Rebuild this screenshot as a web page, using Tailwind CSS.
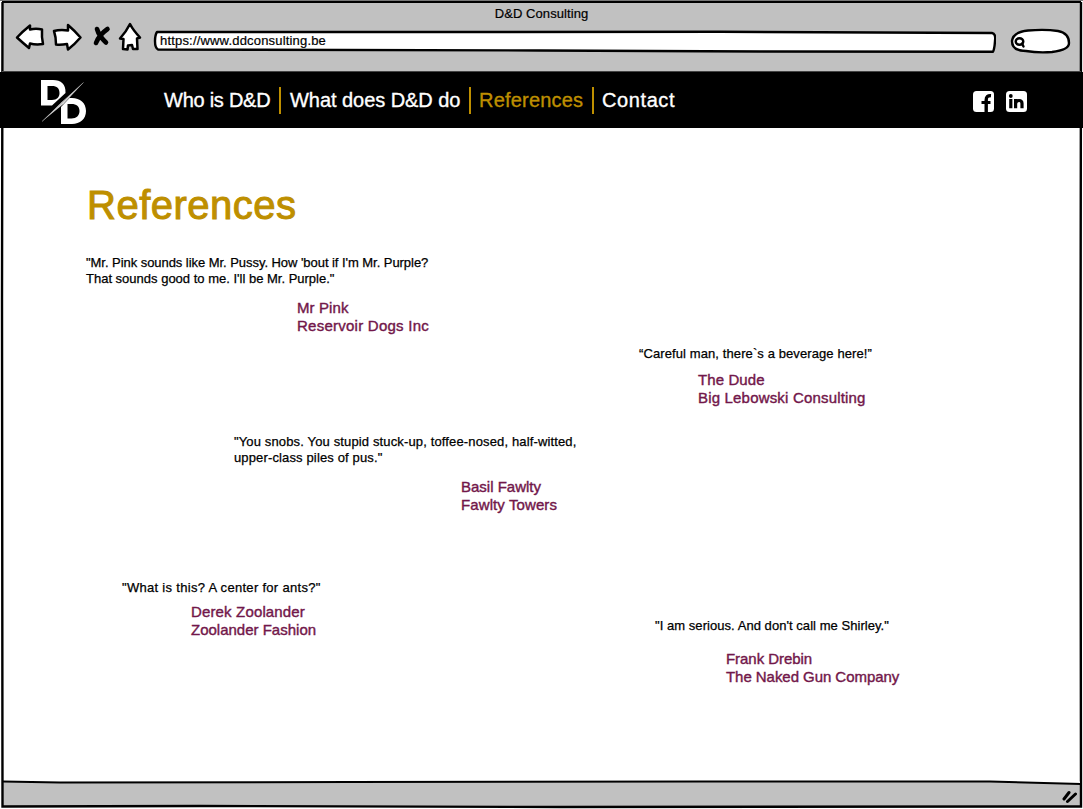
<!DOCTYPE html>
<html lang="en">
<head>
<meta charset="utf-8">
<title>D&amp;D Consulting</title>
<script src="https://cdn.jsdelivr.net/npm/@tailwindcss/browser@4"></script>
</head>
<body class="relative flex h-[809px] w-[1083px] flex-col overflow-hidden bg-white font-['Liberation_Sans',sans-serif] whitespace-nowrap text-black">
  <header class="mx-[2px] h-[72px] shrink-0 bg-[#c1c1c1]">
    <div class="flex h-[26px] justify-center pt-[6px] text-[13px] leading-4 tracking-[0.08px] [-webkit-text-stroke:0.2px]">D&amp;D Consulting</div>
    <div class="flex h-[30px] items-center pl-[12px]">
      <svg class="h-[30px] w-[138px] shrink-0 overflow-visible" viewBox="14 26 138 30" fill="white" stroke="black" stroke-width="2.5" stroke-linejoin="round" stroke-linecap="round">
        <path d="M17 37.5 Q22 32 30 25.500 L30 29.500 Q36 28 42 29.500 Q41.500 37 43 44 Q36 45 30 43.500 L29 48 Q23 43 17 37.500Z"/>
        <path d="M54 31 Q60 29.500 68 30.500 L68 25 Q75 31 80.500 37.500 Q75 44 68 49.500 L67 44 Q61 45 56 44.500 Q56 37 54 31Z"/>
        <path d="M97 29 Q99 36 106 42.500 M107.500 29 Q99 35 96 43" fill="none" stroke-width="4.600"/>
        <path d="M130 24 Q133 30 140 37.500 L137 38.500 L137.500 49 L133 49 L132 45 L128 45.500 L127.500 49.500 L123 49 L123.500 39 L120 38.500 Q126 32 130 24Z"/>
      </svg>
      <div class="relative flex h-[24px] w-[844px] items-center pl-[8px]">
        <svg class="absolute inset-0 h-[24px] w-[844px]" viewBox="152 29 844 24" fill="white" stroke="black" stroke-width="2.4" stroke-linejoin="round"><path d="M157 32 L460 32 L720 31.800 L992 33 Q996 33.500 995 41 Q994.500 49 993 51.700 L760 51.500 L540 50.500 L158 49.500 Q155 48 155 41 Q155 35 157 32Z"/></svg>
        <span class="relative text-[13px] tracking-[0.18px] [-webkit-text-stroke:0.2px]">https://www.ddconsulting.be</span>
      </div>
      <svg class="ml-[12px] h-[28px] w-[64px] shrink-0" viewBox="1008 27 64 28" fill="white" stroke="black" stroke-width="2.4" stroke-linecap="round"><path d="M1012 41 Q1013 32 1028 30.500 Q1045 29 1058 31 Q1069 33 1069 43 Q1069 50 1052 52 Q1038 53 1026 51 Q1012 51 1012 41Z"/><ellipse cx="1019.500" cy="41.500" rx="3.800" ry="3.300"/><path d="M1022 43.500 L1023.500 46.500"/></svg>
    </div>
  </header>

  <nav class="flex h-[56px] shrink-0 items-center bg-black text-[20px] leading-7 text-white [-webkit-text-stroke:0.35px]">
    <svg class="ml-[40px] h-[50px] w-[50px] shrink-0" viewBox="40 75 50 50">
      <path fill="white" fill-rule="evenodd" d="M41 80 H53 C61 80 66 84 65.500 93 L52 105.500 H41Z M47.500 86 V100 H52 C57 100 59.500 97 59.500 93 C59.500 88.500 57 86 52 86Z"/>
      <path fill="white" fill-rule="evenodd" d="M61 107 L69.500 98 H72 C80 98 86 103 86 111 C86 119 80 124 72 124 H61Z M67.500 104 V118.500 H71.500 C76.500 118.500 79.500 115.500 79.500 111 C79.500 106.500 76.500 104 71.500 104Z"/>
      <path d="M49 114 L76 89" stroke="black" stroke-width="3"/>
      <path d="M42 121.500 L61.500 102.300 L83.500 82.500 L64 103.500Z" fill="#d8d8d8"/>
      <path d="M42 121.500 L83.500 82.500" stroke="#aaa" stroke-width=".7"/>
    </svg>
    <a class="ml-[74px] w-[106px] tracking-[-0.25px]">Who is D&amp;D</a>
    <i class="ml-[9px] h-[27px] w-[2px] bg-[#be8f00]"></i>
    <a class="ml-[9px] w-[170px] tracking-[-0.05px]">What does D&amp;D do</a>
    <i class="ml-[9px] h-[27px] w-[2px] bg-[#be8f00]"></i>
    <a class="ml-[8px] w-[105px] tracking-[0.2px] text-[#be8f00]">References</a>
    <i class="ml-[8px] h-[27px] w-[2px] bg-[#be8f00]"></i>
    <a class="ml-[8px] tracking-[0.6px]">Contact</a>
    <div class="mr-[56px] ml-auto flex gap-[12px]">
      <svg class="mt-[2px] size-[21px]" viewBox="0 0 21 21"><rect width="21" height="21" rx="3.500" fill="white"/><path d="M13.200 21 V9 Q13.200 4.300 18 4.700" fill="none" stroke="black" stroke-width="3.400"/><path d="M8.500 11.500 H17.500" stroke="black" stroke-width="3"/></svg>
      <svg class="mt-[2px] size-[21px]" viewBox="0 0 21 21"><rect width="21" height="21" rx="3.500" fill="white"/><circle cx="4.800" cy="5" r="1.900"/><path d="M4.800 8 V17.300 M9.600 17.300 V8 M9.600 12.500 Q10 9.500 13 9.500 Q16 9.500 16 12.500 V17.300" fill="none" stroke="black" stroke-width="3.200"/></svg>
    </div>
  </nav>

  <main class="flex h-[654px] shrink-0 flex-col px-[86px] pt-[53px] text-[13px] leading-4 [-webkit-text-stroke:0.25px]">
    <h1 class="ml-px text-[40px] leading-[48px] tracking-[0.5px] text-[#be8f00] [-webkit-text-stroke:1px]">References</h1>
    <figure class="mt-[26px]">
      <blockquote><p class="tracking-[-0.05px]">"Mr. Pink sounds like Mr. Pussy. How 'bout if I'm Mr. Purple?</p><p>That sounds good to me. I'll be Mr. Purple."</p></blockquote>
      <figcaption class="mt-[12px] ml-[211px] text-[15px] leading-[18px] text-[#72174a] [-webkit-text-stroke:0.4px]"><p class="tracking-[0.1px]">Mr Pink</p><p class="tracking-[0.25px]">Reservoir Dogs Inc</p></figcaption>
    </figure>
    <figure class="mt-[11px] ml-[553px]">
      <blockquote class="tracking-[0.1px]">“Careful man, there`s a beverage here!”</blockquote>
      <figcaption class="mt-[9px] ml-[59px] text-[15px] leading-[18px] text-[#72174a] [-webkit-text-stroke:0.4px]"><p class="tracking-[0.1px]">The Dude</p><p class="tracking-[0.18px]">Big Lebowski Consulting</p></figcaption>
    </figure>
    <figure class="mt-[27px] ml-[148px] tracking-[0.14px]">
      <blockquote>"You snobs. You stupid stuck-up, toffee-nosed, half-witted,<br>upper-class piles of pus."</blockquote>
      <figcaption class="mt-[12px] ml-[227px] text-[15px] leading-[18px] text-[#72174a] [-webkit-text-stroke:0.4px]"><p class="tracking-normal">Basil Fawlty</p><p class="tracking-[0.1px]">Fawlty Towers</p></figcaption>
    </figure>
    <div class="mt-[66px] flex items-start">
      <figure class="ml-[36px] w-[533px]">
        <blockquote class="tracking-[0.3px]">"What is this? A center for ants?"</blockquote>
        <figcaption class="mt-[7px] ml-[69px] text-[15px] leading-[18px] text-[#72174a] [-webkit-text-stroke:0.4px]"><p class="tracking-[0.15px]">Derek Zoolander</p><p>Zoolander Fashion</p></figcaption>
      </figure>
      <figure class="mt-[38px]">
        <blockquote class="tracking-[0.05px]">"I am serious. And don't call me Shirley."</blockquote>
        <figcaption class="mt-[16px] ml-[71px] text-[15px] leading-[18px] text-[#72174a] [-webkit-text-stroke:0.4px]"><p class="tracking-[-0.05px]">Frank Drebin</p><p class="tracking-[-0.05px]">The Naked Gun Company</p></figcaption>
      </figure>
    </div>
  </main>

  <footer class="mx-[2px] mb-[3px] flex flex-1 items-center justify-end bg-[#c1c1c1] pr-[3px]">
    <svg class="mt-[5px] h-[14px] w-[16px]" viewBox="0 0 16 14" stroke="black" stroke-width="3" stroke-linecap="round"><path d="M2 9 L7 2.500 M5.500 11.500 L13.500 4"/></svg>
  </footer>

  <!-- Hand-drawn window outline -->
  <svg class="pointer-events-none absolute inset-0 h-[809px] w-[1083px]" viewBox="0 0 1083 809" fill="none" stroke="black" stroke-width="2">
    <path d="M0 .5 H1083" stroke="#777" stroke-width="1"/>
    <path d="M2 2 H1081"/>
    <path d="M2.500 2 L2 300 L2.500 806.500 L200 806 L560 807 L1081 806.500 L1080.500 400 L1081 2" stroke-width="2.400"/>
    <path d="M2 71.500 H1081" stroke="#444" stroke-width="1"/>
    <path d="M1000 781.500 L1080 784 V781.500Z" fill="white" stroke="none"/>
    <path d="M3 781.500 L60 782.500 L350 782 L700 781.500 L990 781.500 L1081 784"/>
  </svg>
</body>
</html>
